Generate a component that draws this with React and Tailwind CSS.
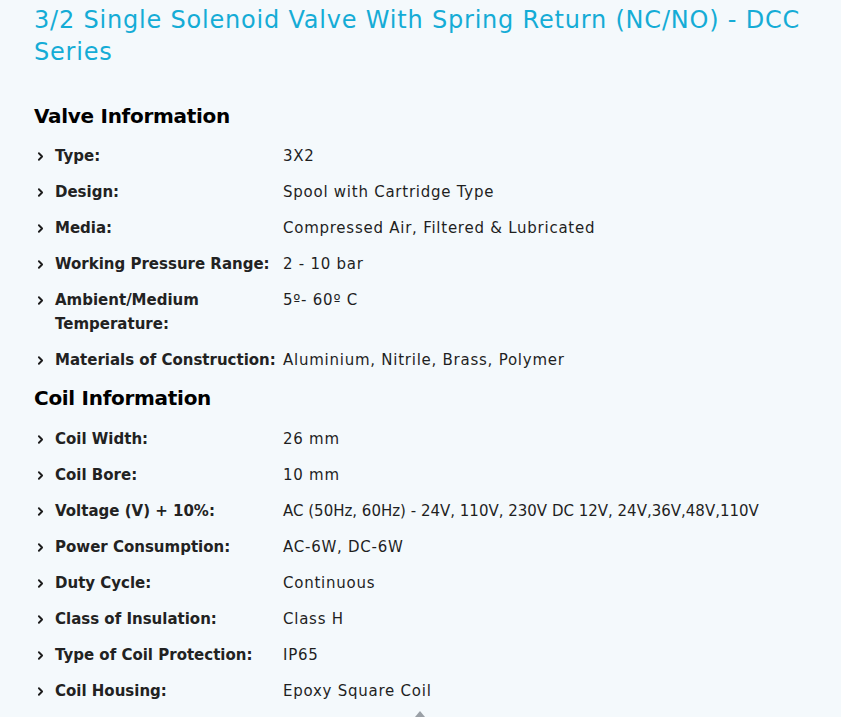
import React from 'react';
import { ChevronRight } from 'lucide-react';

const valveInfo = [
    ['Type:', '3X2'],
    ['Design:', 'Spool with Cartridge Type'],
    ['Media:', 'Compressed Air, Filtered & Lubricated'],
    ['Working Pressure Range:', '2 - 10 bar'],
    ['Ambient/Medium Temperature:', '5º- 60º C'],
    ['Materials of Construction:', 'Aluminium, Nitrile, Brass, Polymer'],
];

const coilInfo = [
    ['Coil Width:', '26 mm'],
    ['Coil Bore:', '10 mm'],
    ['Voltage (V) + 10%:', 'AC (50Hz, 60Hz) - 24V, 110V, 230V DC 12V, 24V,36V,48V,110V', true],
    ['Power Consumption:', 'AC-6W, DC-6W'],
    ['Duty Cycle:', 'Continuous'],
    ['Class of Insulation:', 'Class H'],
    ['Type of Coil Protection:', 'IP65'],
    ['Coil Housing:', 'Epoxy Square Coil'],
];

const SpecList = ({ items }) => (
    <ul className="flex flex-col gap-3">
        {items.map(([label, value, dense]) => (
            <li key={label} className="flex items-start text-[15px] leading-6">
                <span className="w-[21px] h-6 flex items-center shrink-0">
                    <ChevronRight size={13} strokeWidth={3.4} className="text-[#1c1c1c]" />
                </span>
                <span className="w-[228px] shrink-0 font-semibold text-[#222]">{label}</span>
                <span className={dense ? 'text-[#1f1f1f]' : 'text-[#1f1f1f] tracking-[0.75px]'}>{value}</span>
            </li>
        ))}
    </ul>
);

const App = () => {
    return (
        <div className="min-h-screen bg-[#f4f9fc] font-['DejaVu_Sans',sans-serif] pl-[34px] pr-4 pt-[4px] relative">
            <h1 className="text-[24px] leading-8 font-medium text-[#15acd6] tracking-[0.8px]">
                3/2 Single Solenoid Valve With Spring Return (NC/NO) - DCC Series
            </h1>

            <h2 className="mt-[32px] text-[20px] leading-8 font-semibold text-black tracking-[-0.3px]">Valve Information</h2>
            <div className="mt-[12px]">
                <SpecList items={valveInfo} />
            </div>

            <h2 className="mt-[10px] text-[20px] leading-8 font-semibold text-black tracking-[-0.3px]">Coil Information</h2>
            <div className="mt-[13px]">
                <SpecList items={coilInfo} />
            </div>

            <div className="absolute left-[415px] top-[711px] w-0 h-0 border-l-[5px] border-r-[5px] border-b-[6px] border-l-transparent border-r-transparent border-b-[#9aa0a6]"></div>
        </div>
    );
};

export default App;
